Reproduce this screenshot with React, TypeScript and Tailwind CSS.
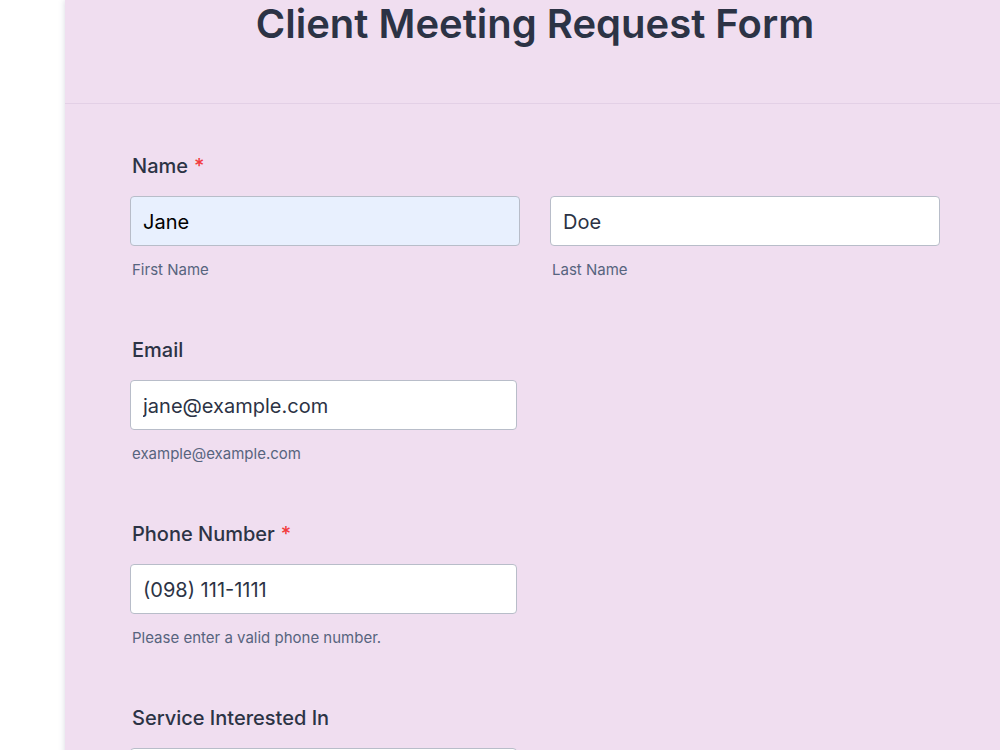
import React from "react";

type FieldProps = {
  label: string;
  required?: boolean;
  children: React.ReactNode;
};

function Field({ label, required, children }: FieldProps) {
  return (
    <div className="flex flex-col">
      <label className="pl-[2px] text-[20px] leading-[24px] font-medium text-[#2c3345]">
        {label}
        {required && <span className="ml-[6px] text-[#f23a3c]">*</span>}
      </label>
      <div className="mt-[18px]">{children}</div>
    </div>
  );
}

function Sub({ children }: { children: React.ReactNode }) {
  return (
    <div className="mt-[14px] pl-[2px] text-[15px] leading-[20px] text-[#57647e]">
      {children}
    </div>
  );
}

function TextBox({
  value,
  width,
  autofill,
}: {
  value: string;
  width: string;
  autofill?: boolean;
}) {
  return (
    <input
      readOnly
      value={value}
      className={`${width} h-[50px] rounded-[4px] border border-[#b8bdc9] px-[12px] pt-[1px] text-[20px] outline-none ${
        autofill ? "bg-[#e8f0fe] text-black" : "bg-white text-[#2c3345]"
      }`}
      style={{ fontFamily: "Inter, 'Noto Sans', sans-serif" }}
    />
  );
}

export default function App() {
  return (
    <div
      className="w-[1000px] h-[750px] overflow-hidden bg-white"
      style={{ fontFamily: "Inter, 'Noto Sans', sans-serif" }}
    >
      <div className="ml-[65px] w-[940px] min-h-[750px] bg-[#f0def0] shadow-[0_0_6px_rgba(87,100,126,0.25)]">
        <header className="h-[104px] border-b border-[#e3d0e6]">
          <h1 className="text-center text-[40px] leading-[48px] font-semibold text-[#2c3345]">
            Client Meeting Request Form
          </h1>
        </header>

        <div className="pl-[65px] pt-[50px] flex flex-col gap-[58px]">
          <div>
            <Field label="Name" required>
              <div className="flex gap-[30px]">
                <div>
                  <TextBox value="Jane" width="w-[390px]" autofill />
                  <Sub>First Name</Sub>
                </div>
                <div>
                  <TextBox value="Doe" width="w-[390px]" />
                  <Sub>Last Name</Sub>
                </div>
              </div>
            </Field>
          </div>

          <div>
            <Field label="Email">
              <TextBox value="jane@example.com" width="w-[387px]" />
              <Sub>example@example.com</Sub>
            </Field>
          </div>

          <div>
            <Field label="Phone Number" required>
              <TextBox value="(098) 111-1111" width="w-[387px]" />
              <Sub>Please enter a valid phone number.</Sub>
            </Field>
          </div>

          <div>
            <Field label="Service Interested In">
              <TextBox value="" width="w-[387px]" />
            </Field>
          </div>
        </div>
      </div>
    </div>
  );
}
